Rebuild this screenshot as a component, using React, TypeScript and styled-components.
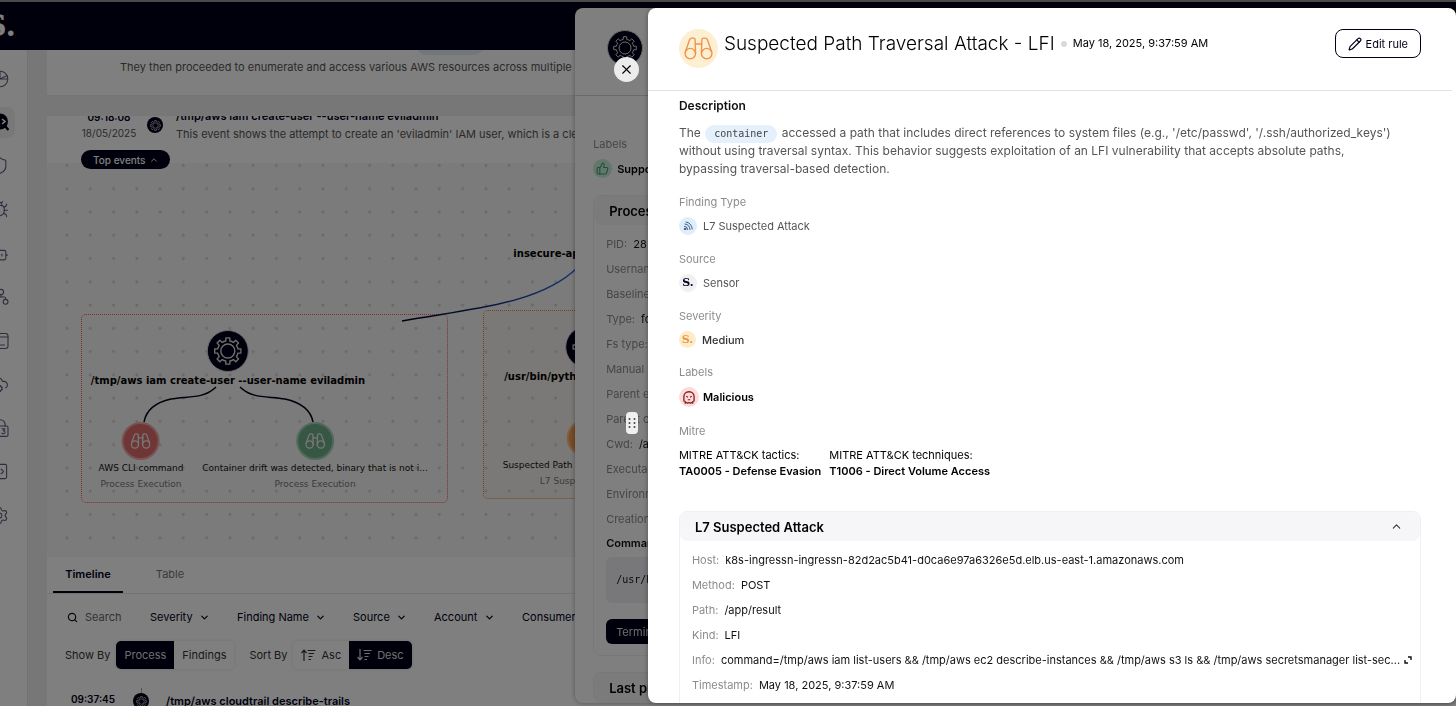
import React from "react";
import styled, { createGlobalStyle, css } from "styled-components";
import {
  ChevronDown,
  ChevronUp,
  Search,
  Pencil,
  X,
  ThumbsUp,
  Shield,
  Bug,
  Bot,
  CloudCog,
  SquareCode,
  Settings,
} from "lucide-react";

const INK = "#000018";

const GlobalStyle = createGlobalStyle`
  *, *::before, *::after { box-sizing: border-box; }
  body {
    margin: 0;
    background: #efefef;
    color: #111;
    font-family: Inter, "Liberation Sans", sans-serif;
    font-size: 11px;
    overflow: hidden;
  }
  button, input, select {
    font: inherit;
    color: inherit;
    background: none;
    border: 0;
    padding: 0;
    margin: 0;
  }
  button { cursor: pointer; white-space: nowrap; }
  h1, h2, h3, p, dl, dd, ul { margin: 0; padding: 0; }
  svg { display: block; flex: none; }
`;

/* ---------- icons ---------- */

const gearPath = (teeth: number, outer: number, inner: number) => {
  const step = (Math.PI * 2) / teeth;
  const pt = (r: number, a: number) =>
    `${(12 + r * Math.cos(a)).toFixed(2)} ${(12 + r * Math.sin(a)).toFixed(2)}`;
  let d = "";
  for (let i = 0; i < teeth; i++) {
    const a = i * step - Math.PI / 2;
    d += `${i ? "L" : "M"}${pt(inner, a - step * 0.26)}L${pt(outer, a - step * 0.19)}L${pt(outer, a + step * 0.19)}L${pt(inner, a + step * 0.26)}`;
    d += `A${inner} ${inner} 0 0 1 ${pt(inner, a + step * 0.74)}`;
  }
  return d + "Z";
};

const Gear = ({ size, stroke = 1 }: { size: number; stroke?: number }) => (
  <svg width={size} height={size} viewBox="0 0 24 24" fill="none" stroke="currentColor" strokeWidth={stroke} strokeLinejoin="round">
    <path d={gearPath(8, 11.4, 8.8)} />
    <circle cx="12" cy="12" r="6" />
  </svg>
);

const Binoculars = ({ width, stroke = 1.4 }: { width: number; stroke?: number }) => (
  <svg width={width} height={(width * 24) / 30} viewBox="0 0 30 24" fill="none" stroke="currentColor" strokeWidth={stroke} strokeLinecap="round" strokeLinejoin="round">
    <circle cx="6.5" cy="17.2" r="5.4" />
    <circle cx="23.5" cy="17.2" r="5.4" />
    <path d="M1.3 15.6 5.8 2.8Q6.4 1.2 8 1.2H9.8Q11.4 1.2 11.5 2.8L12 17" />
    <path d="M28.7 15.6 24.2 2.8Q23.6 1.2 22 1.2H20.2Q18.6 1.2 18.5 2.8L18 17" />
    <path d="M11.7 7.2H18.3" />
  </svg>
);

const Signal = () => (
  <svg width="10" height="10" viewBox="0 0 20 20" fill="none" stroke="currentColor" strokeWidth="1.7" strokeLinecap="round">
    <circle cx="4" cy="16" r="1.6" />
    <path d="M3 10.5A6.8 6.8 0 0 1 9.5 17M4 6A11.4 11.4 0 0 1 14 17M6 2A15 15 0 0 1 18.4 16" />
  </svg>
);

const Skull = () => (
  <svg width="12" height="13" viewBox="0 0 24 26" fill="none" stroke="currentColor" strokeWidth="2.6" strokeLinejoin="round">
    <path d="M12 1.500C5.500 1.500 1.800 5.500 1.800 11.500V20l2.700 1v3.500l2.500-1.500 2.500 1.500 2.500-1.500 2.500 1.500 2.500-1.500 2.500 1.500V21l2.700-1v-8.500C22.200 5.500 18.500 1.500 12 1.500Z" />
    <path d="M6.500 10.500 10 12.500M17.500 10.500 14 12.500M9.500 17.500h5" strokeWidth="2.200" />
  </svg>
);

const SortIcon = ({ up }: { up?: boolean }) => (
  <svg width="15" height="12" viewBox="0 0 15 12" fill="none" stroke="currentColor" strokeWidth="1.2">
    <path d={up ? "M3 12V1.500M.5 4 3 1.200 5.500 4" : "M3 0v10.500M.5 8 3 10.800 5.500 8"} />
    <path d="M6.500 1.500H14.500M7.500 4.500H13M7.500 7.500H11.500M7.500 10.500H10" />
  </svg>
);

const Expand = () => (
  <svg width="8" height="8" viewBox="0 0 8 8" fill="none" stroke="currentColor" strokeWidth="1.4">
    <path d="M4 1H7V4M4 7H1V4" />
  </svg>
);

const CaseSearch = () => (
  <svg width="18" height="18" viewBox="0 0 18 18">
    <circle cx="9" cy="8.500" r="8" fill={INK} />
    <path d="M14 13l3.500 4" stroke={INK} strokeWidth="2.500" />
    <path d="M11 6l3 2.500-3 2.500" stroke="#fff" strokeWidth="1.600" fill="none" />
  </svg>
);

const LineIcon = ({ children }: { children: React.ReactNode }) => (
  <svg width="18" height="18" viewBox="0 0 18 18" fill="none" stroke="currentColor" strokeWidth="1.1" strokeLinecap="round" strokeLinejoin="round">
    {children}
  </svg>
);

const Pie = () => (
  <LineIcon>
    <circle cx="9" cy="9" r="7.800" />
    <path d="M9 1.200V9L16 5.500M9 9H16.500" />
  </LineIcon>
);

const Tree = () => (
  <LineIcon>
    <circle cx="10" cy="4" r="2.600" />
    <circle cx="14.600" cy="13.800" r="2.400" />
    <circle cx="3" cy="13.800" r="2.400" />
    <path d="M10 6.600V9h3.200q1.400 0 1.400 1.400v1M10 9H4.400Q3 9 3 10.400v1" />
  </LineIcon>
);

const Inventory = () => (
  <LineIcon>
    <rect x="1" y="1.500" width="16" height="15" rx="2.500" />
    <path d="M1 5h16M9.500 13h4" />
  </LineIcon>
);

const LockThree = () => (
  <LineIcon>
    <rect x="1.500" y="7" width="15.500" height="10.400" rx="1.500" />
    <path d="M4.500 7V5.500a4.800 4.800 0 0 1 9.600 0V7M11 9.800h2.800l-1.600 1.800q1.900 0 1.900 1.600t-1.700 1.600q-1 0-1.500-.7" />
  </LineIcon>
);

/* ---------- page shell ---------- */

const Page = styled.div`
  height: 100vh;
  display: flex;
  flex-direction: column;
  overflow: hidden;
  border-top: 2px solid #949494;
`;

const TopBar = styled.header`
  flex: none;
  height: 48px;
  background: ${INK};
  display: flex;
  align-items: center;
`;

const Logo = styled.a`
  width: 16px;
  overflow: hidden;
  display: flex;
  justify-content: flex-end;
  color: #fff;
  text-decoration: none;
  font: bold 30px/36px "DejaVu Serif", serif;
`;

const Body = styled.div`
  flex: 1;
  min-height: 0;
  display: flex;
`;

const Sidebar = styled.nav`
  flex: none;
  width: 28px;
  padding-top: 13px;
  background: #fff;
  border-right: 1px solid #e4e4e4;
  overflow: hidden;
`;

const SideList = styled.div`
  height: 468px;
  display: flex;
  flex-direction: column;
  justify-content: space-between;
`;

const SideLink = styled.a<{ $active?: boolean }>`
  width: 15px;
  height: 31px;
  display: flex;
  justify-content: flex-end;
  align-items: center;
  padding-right: 6px;
  border-radius: 0 8px 8px 0;
  color: #5a5f7d;
  background: ${(p) => (p.$active ? "#f0f0f2" : "transparent")};
`;

const Main = styled.main`
  flex: 1;
  min-width: 0;
  padding-left: 19px;
  display: flex;
  flex-direction: column;
  gap: 20px;
`;

const SummaryCard = styled.section`
  flex: none;
  height: 46px;
  padding: 0 73px 18px;
  background: #fff;
  border-bottom: 1px solid #e8e8e8;
  display: flex;
  flex-direction: column;
  justify-content: flex-end;
  overflow: hidden;
  line-height: 19px;
  color: #555;
  white-space: nowrap;
`;

const HiddenTag = styled.span`
  flex: none;
  width: 66px;
  height: 19px;
  margin: 0 0 3px 297px;
  border-radius: 9px;
  background: #e0eefb;
`;

const StoryCard = styled.section`
  flex: 1;
  min-height: 0;
  display: flex;
  flex-direction: column;
  background: #fff;
  overflow: hidden;
`;

const EventStrip = styled.div`
  flex: none;
  height: 47px;
  padding: 0 34px 20px;
  display: flex;
  align-items: flex-end;
  overflow: hidden;
`;

const EventTime = styled.div`
  width: 56px;
  margin-bottom: 2px;
  text-align: center;
  font-size: 10px;
  line-height: 16px;
  color: #555;
  strong { display: block; color: ${INK}; font-weight: 600; }
`;

const EventText = styled.div`
  margin-left: 13px;
  line-height: 18px;
  color: #555;
  white-space: nowrap;
  h3 { font-size: 11px; line-height: 18px; font-weight: 600; color: ${INK}; }
`;

const MiniGear = styled.span`
  width: 16px;
  height: 16px;
  margin: 0 0 10px 10px;
  border-radius: 50%;
  background: ${INK};
  color: #ccc;
  display: grid;
  place-items: center;
  flex: none;
`;

/* ---------- graph ---------- */

const Canvas = styled.div`
  position: relative;
  flex: none;
  height: 394px;
  background: #f6f6f6;
  > svg { position: absolute; inset: 0; width: 100%; height: 100%; }
`;

const TopEvents = styled.button`
  position: absolute;
  z-index: 1;
  left: 34px;
  top: -13px;
  height: 19px;
  padding: 0 11px 0 12px;
  border-radius: 10px;
  background: ${INK};
  color: #fff;
  font-size: 10px;
  font-weight: 500;
  display: flex;
  align-items: center;
  gap: 4px;
`;

const Cluster = styled.div<{ $x: number; $y: number; $w: number; $tone: "red" | "orange" }>`
  position: absolute;
  left: ${(p) => p.$x}px;
  top: ${(p) => p.$y}px;
  width: ${(p) => p.$w}px;
  height: 189px;
  border: 1px dotted;
  border-radius: 5px;
  ${(p) =>
    p.$tone === "red"
      ? css`border-color: #ff5a5a; background: transparent;`
      : css`border-color: #ee8a30; background: rgba(255, 225, 190, 0.12);`}
`;

const Node = styled.div<{ $x: number; $y: number }>`
  position: absolute;
  left: ${(p) => p.$x}px;
  top: ${(p) => p.$y}px;
  transform: translateX(-50%);
  display: flex;
  flex-direction: column;
  align-items: center;
  font-family: "DejaVu Sans", sans-serif;
  white-space: nowrap;
`;

const ProcessDisc = styled.span`
  width: 42px;
  height: 42px;
  border-radius: 50%;
  border: 1px solid #d4d4dc;
  background: ${INK};
  color: #ddd;
  display: grid;
  place-items: center;
`;

const FindingDisc = styled.span<{ $fill: string; $ring: string }>`
  width: 38px;
  height: 38px;
  border-radius: 50%;
  border: 2px solid ${(p) => p.$ring};
  background: ${(p) => p.$fill};
  color: #eee;
  display: grid;
  place-items: center;
`;

const NodeTitle = styled.strong`
  font-size: 10px;
  line-height: 18px;
  color: #000;
`;

const NodeName = styled.span`
  font-size: 9px;
  line-height: 16px;
  color: #111;
`;

const NodeKind = styled.span`
  font-size: 9px;
  line-height: 16px;
  color: #777;
`;

/* ---------- tabs, filters ---------- */

const Tabs = styled.div`
  flex: none;
  height: 37px;
  padding-left: 6px;
  display: flex;
  gap: 12px;
  border-bottom: 1px solid #e6e6e6;
`;

const Tab = styled.button<{ $active?: boolean }>`
  width: 70px;
  color: ${(p) => (p.$active ? INK : "#777")};
  font-weight: ${(p) => (p.$active ? 600 : 400)};
  border-bottom: ${(p) => (p.$active ? `2px solid ${INK}` : "2px solid transparent")};
`;

const Filters = styled.div`
  flex: none;
  height: 46px;
  padding-left: 20px;
  display: flex;
  align-items: center;
  gap: 27px;
`;

const SearchBox = styled.label`
  width: 56px;
  display: flex;
  align-items: center;
  gap: 7px;
  input { flex: 1; min-width: 0; outline: 0; }
  input::placeholder { color: #666; opacity: 1; }
`;

const Dropdown = styled.label`
  display: flex;
  align-items: center;
  gap: 6px;
  color: ${INK};
  select { appearance: none; outline: 0; }
`;

const SortRow = styled.div`
  flex: none;
  height: 30px;
  padding-left: 18px;
  display: flex;
  align-items: center;
  color: #333;
`;

const Segment = styled.div`
  display: flex;
  height: 28px;
  margin: 0 15px 0 6px;
  border-radius: 5px;
  overflow: hidden;
  box-shadow: 0 0 4px rgba(0, 0, 0, 0.12);
`;

const SegmentButton = styled.button<{ $on?: boolean }>`
  display: flex;
  align-items: center;
  gap: 5px;
  padding: 0 8px;
  color: ${(p) => (p.$on ? "#ddd" : "#333")};
  background: ${(p) => (p.$on ? INK : "#fff")};
`;

const TimelineRow = styled.div`
  flex: none;
  height: 40px;
  margin-top: 18px;
  padding-left: 18px;
  display: flex;
  align-items: flex-start;
`;

const RowTime = styled.strong`
  width: 56px;
  text-align: center;
  font-size: 10px;
  line-height: 22px;
  font-weight: 600;
  color: ${INK};
`;

const RowMarker = styled.span`
  display: flex;
  flex-direction: column;
  align-items: center;
  margin-left: 12px;
  &::before { content: ""; height: 5px; border-left: 1px solid #aaa; }
  ${MiniGear} { margin: 0; }
`;

const RowTitle = styled.strong`
  margin-left: 17px;
  font-size: 11px;
  line-height: 26px;
  font-weight: 600;
  color: ${INK};
`;

/* ---------- drawers ---------- */

const Scrim = styled.div`
  position: fixed;
  inset: 0;
  z-index: 3;
  background: rgba(0, 0, 0, 0.5);
`;

const Drawer = styled.aside<{ $width: string; $front?: boolean }>`
  position: fixed;
  z-index: ${(p) => (p.$front ? 4 : 2)};
  top: 8px;
  right: 0;
  bottom: 3px;
  width: ${(p) => p.$width};
  background: #fff;
  border-radius: 8px;
  box-shadow: 0 0 5px rgba(0, 0, 0, 0.35);
`;

const DrawerScroll = styled.div`
  height: 100%;
  overflow: hidden;
  border-radius: 8px;
`;

const BackHeader = styled.div`
  height: 88px;
  padding: 22px 32px;
  border-bottom: 1px solid #d4d4d4;
  ${ProcessDisc} { width: 36px; height: 36px; }
`;

const BackBody = styled.div`
  padding: 40px 35px 0 18px;
`;

const FieldLabel = styled.div`
  line-height: 16px;
  color: #8c8c8c;
`;

const Panel = styled.section<{ $gap: number }>`
  margin-top: ${(p) => p.$gap}px;
  border: 1px solid #f0f0f2;
  border-radius: 8px;
`;

const PanelHead = styled.h2`
  height: 29px;
  padding: 0 17px 0 15px;
  border-radius: 8px;
  background: #f6f6f8;
  font-size: 13px;
  font-weight: 600;
  color: #000;
  display: flex;
  align-items: center;
  justify-content: space-between;
`;

const Facts = styled.dl`
  padding: 6px 12px 0;
  &:last-child { padding-bottom: 12px; }
`;

const Fact = styled.div`
  height: 25px;
  display: flex;
  align-items: center;
  gap: 6px;
  white-space: nowrap;
  dt { color: #8c8c8c; }
  dd { color: #111; display: flex; align-items: center; gap: 4px; }
`;

const CommandTitle = styled.h3`
  padding: 0 12px;
  font-size: 11px;
  line-height: 24px;
  font-weight: 600;
`;

const CommandBox = styled.pre`
  margin: 2px 12px 16px;
  padding: 0 10px;
  border-radius: 6px;
  background: #f0f0f6;
  font: 10px/46px "DejaVu Sans Mono", monospace;
`;

const DarkButton = styled.button`
  height: 25px;
  margin: 0 12px 11px;
  padding: 0 10px;
  border-radius: 6px;
  background: ${INK};
  color: #ddd;
`;

const CloseButton = styled.button`
  position: absolute;
  left: -34px;
  top: 49px;
  width: 25px;
  height: 25px;
  border-radius: 50%;
  background: #ececec;
  color: #000;
  display: grid;
  place-items: center;
`;

const DragHandle = styled.button`
  position: absolute;
  left: -22px;
  top: 404px;
  width: 12px;
  height: 22px;
  border-radius: 4px;
  background: #f0f0f0;
  color: #444;
  display: grid;
  place-items: center;
`;

const FrontHeader = styled.header`
  height: 83px;
  margin-right: 4px;
  padding: 21px 31px 0;
  border-bottom: 1px solid #e2e2e2;
  display: flex;
  align-items: flex-start;
`;

const Badge = styled.span<{ $size: number; $bg: string; $fg: string }>`
  flex: none;
  width: ${(p) => p.$size}px;
  height: ${(p) => p.$size}px;
  border-radius: 50%;
  background: ${(p) => p.$bg};
  color: ${(p) => p.$fg};
  display: grid;
  place-items: center;
`;

const TitleLine = styled.div`
  flex: 1;
  margin-left: 6px;
  display: flex;
  align-items: center;
  gap: 6px;
  line-height: 29px;
  color: #000;
  h1 { font-size: 19px; line-height: 29px; font-weight: 300; }
`;

const Dot = styled.i`
  width: 6px;
  height: 6px;
  border-radius: 50%;
  background: #dadada;
`;

const EditButton = styled.button`
  height: 29px;
  padding: 0 12px;
  border: 1px solid ${INK};
  border-radius: 8px;
  color: ${INK};
  display: flex;
  align-items: center;
  gap: 4px;
`;

const FrontBody = styled.div`
  padding: 6px 35px 0 31px;
`;

const SectionTitle = styled.h2`
  font-size: 12px;
  line-height: 18px;
  font-weight: 600;
  color: #111;
`;

const Description = styled.p`
  margin-top: 9px;
  padding-right: 20px;
  font-size: 12px;
  line-height: 18px;
  color: #555;
`;

const CodeTag = styled.code`
  margin: 0 1px;
  padding: 3px 9px 4px;
  border-radius: 9px;
  background: #e4f0fc;
  color: #444;
  font-family: "DejaVu Sans Mono", monospace;
  font-size: 10px;
  line-height: 10px;
`;

const Field = styled.div`
  margin-top: 16px;
`;

const FieldValue = styled.div<{ $weight?: number; $color?: string; $gap?: number }>`
  margin-top: 7px;
  display: flex;
  align-items: center;
  gap: ${(p) => p.$gap || 6}px;
  color: ${(p) => p.$color || "#555"};
  font-weight: ${(p) => p.$weight || 400};
`;

const SMark = styled.span`
  font: bold 11px/14px "DejaVu Serif", serif;
`;

const MitreRow = styled.div`
  display: flex;
  gap: 8px;
  margin-top: 8px;
  line-height: 16px;
  color: #000;
  strong { display: block; font-weight: 600; }
`;

const navIcon = { size: 19, strokeWidth: 1.4 };

const BACK_FACTS: [string, string][] = [
  ["PID:", "28"],
  ["Username:", "root"],
  ["Baseline:", "-"],
  ["Type:", "fork"],
  ["Fs type:", "overlay"],
  ["Manual run:", "-"],
  ["Parent executable:", "-"],
  ["Parent command:", "-"],
  ["Cwd:", "/app"],
  ["Executable:", "-"],
  ["Environment:", "-"],
  ["Creation time:", "-"],
];

const FRONT_FACTS: [string, string][] = [
  ["Host:", "k8s-ingressn-ingressn-82d2ac5b41-d0ca6e97a6326e5d.elb.us-east-1.amazonaws.com"],
  ["Method:", "POST"],
  ["Path:", "/app/result"],
  ["Kind:", "LFI"],
  [
    "Info:",
    "command=/tmp/aws iam list-users && /tmp/aws ec2 describe-instances && /tmp/aws s3 ls && /tmp/aws secretsmanager list-sec...",
  ],
  ["Timestamp:", "May 18, 2025, 9:37:59 AM"],
];

const NAV = [
  { label: "Dashboard", icon: <Pie /> },
  { label: "Investigate", icon: <CaseSearch />, active: true },
  { label: "Protection", icon: <Shield {...navIcon} /> },
  { label: "Vulnerabilities", icon: <Bug {...navIcon} /> },
  { label: "Agents", icon: <Bot {...navIcon} /> },
  { label: "Topology", icon: <Tree /> },
  { label: "Inventory", icon: <Inventory /> },
  { label: "Cloud", icon: <CloudCog {...navIcon} /> },
  { label: "Secrets", icon: <LockThree /> },
  { label: "Code", icon: <SquareCode {...navIcon} /> },
  { label: "Settings", icon: <Settings {...navIcon} /> },
];

const Graph = () => (
  <Canvas>
    <svg>
      <defs>
        <pattern id="dots" x="8.4" y="14" width="23.27" height="23.27" patternUnits="userSpaceOnUse">
          <circle cx="11.600" cy="11.600" r="1.500" fill="#d0d0d2" />
        </pattern>
        <linearGradient id="link" gradientUnits="userSpaceOnUse" x1="355" y1="0" x2="530" y2="0">
          <stop offset="0" stopColor={INK} />
          <stop offset="0.4" stopColor="#0a1c60" />
          <stop offset="1" stopColor="#2f6be8" />
        </linearGradient>
      </defs>
      <rect width="100%" height="100%" fill="url(#dots)" />
    </svg>
    <TopEvents>
      Top events <ChevronUp size={10} />
    </TopEvents>
    <Cluster $x={34} $y={151} $w={367} $tone="red" />
    <Cluster $x={436} $y={147} $w={206} $tone="orange" />
    <svg fill="none" strokeWidth="1.500">
      <path d="M355 158C420 146 492 142 530 105" stroke="url(#link)" />
      <path d="M169 224C157 236 141 233 124 236C106 240 99 248 97 259" stroke={INK} />
      <path d="M193 224C205 236 221 233 238 236C256 240 264 248 266 259" stroke={INK} />
    </svg>
    <Node $x={503} $y={82}>
      <NodeTitle>insecure-app</NodeTitle>
    </Node>
    <Node $x={181} $y={167}>
      <ProcessDisc><Gear size={28} stroke={1.2} /></ProcessDisc>
      <NodeTitle>/tmp/aws iam create-user --user-name eviladmin</NodeTitle>
    </Node>
    <Node $x={94} $y={259}>
      <FindingDisc $fill="#e06c6c" $ring="#f0a8a8"><Binoculars width={20} stroke={2} /></FindingDisc>
      <NodeName>AWS CLI command</NodeName>
      <NodeKind>Process Execution</NodeKind>
    </Node>
    <Node $x={268} $y={259}>
      <FindingDisc $fill="#6fae88" $ring="#a4d4b6"><Binoculars width={20} stroke={2} /></FindingDisc>
      <NodeName>Container drift was detected, binary that is not i...</NodeName>
      <NodeKind>Process Execution</NodeKind>
    </Node>
    <Node $x={539} $y={163}>
      <ProcessDisc><Gear size={28} stroke={1.2} /></ProcessDisc>
      <NodeTitle>/usr/bin/python3 /app/app.py</NodeTitle>
    </Node>
    <Node $x={539} $y={256}>
      <FindingDisc $fill="#f09a50" $ring="#f6c090"><Binoculars width={20} stroke={2} /></FindingDisc>
      <NodeName>Suspected Path Traversal Attack - LFI</NodeName>
      <NodeKind>L7 Suspected Attack</NodeKind>
    </Node>
  </Canvas>
);

export default function App() {
  return (
    <>
      <GlobalStyle />
      <Page>
        <TopBar>
          <Logo href="#" aria-label="Home">S.</Logo>
        </TopBar>
        <Body>
          <Sidebar>
            <SideList>
              {NAV.map((n) => (
                <SideLink key={n.label} href="#" aria-label={n.label} $active={n.active}>{n.icon}</SideLink>
              ))}
            </SideList>
          </Sidebar>
          <Main>
            <SummaryCard>
              <HiddenTag />
              <p>They then proceeded to enumerate and access various AWS resources across multiple services.</p>
            </SummaryCard>
            <StoryCard>
              <EventStrip>
                <EventTime><strong>09:18:08</strong>18/05/2025</EventTime>
                <MiniGear><Gear size={11} stroke={1.6} /></MiniGear>
                <EventText>
                  <h3>/tmp/aws iam create-user --user-name eviladmin</h3>
                  This event shows the attempt to create an 'eviladmin' IAM user, which is a clear sign
                </EventText>
              </EventStrip>
              <Graph />
              <Tabs role="tablist">
                <Tab role="tab" aria-selected="true" $active>Timeline</Tab>
                <Tab role="tab" aria-selected="false">Table</Tab>
              </Tabs>
              <Filters>
                <SearchBox>
                  <Search size={11} strokeWidth={2.6} />
                  <input placeholder="Search" aria-label="Search" />
                </SearchBox>
                {["Severity", "Finding Name", "Source", "Account", "Consumer"].map((f) => (
                  <Dropdown key={f}>
                    <select aria-label={f}><option>{f}</option></select>
                    <ChevronDown size={11} strokeWidth={2.6} />
                  </Dropdown>
                ))}
              </Filters>
              <SortRow>
                Show By
                <Segment>
                  <SegmentButton $on>Process</SegmentButton>
                  <SegmentButton>Findings</SegmentButton>
                </Segment>
                Sort By
                <Segment>
                  <SegmentButton><SortIcon up />Asc</SegmentButton>
                  <SegmentButton $on><SortIcon />Desc</SegmentButton>
                </Segment>
              </SortRow>
              <TimelineRow>
                <RowTime>09:37:45</RowTime>
                <RowMarker><MiniGear><Gear size={11} stroke={1.6} /></MiniGear></RowMarker>
                <RowTitle>/tmp/aws cloudtrail describe-trails</RowTitle>
              </TimelineRow>
            </StoryCard>
          </Main>
        </Body>
      </Page>

      <Drawer $width="60.5vw">
        <DrawerScroll>
          <BackHeader>
            <ProcessDisc><Gear size={24} /></ProcessDisc>
          </BackHeader>
          <BackBody>
            <FieldLabel>Labels</FieldLabel>
            <FieldValue $weight={600} $color="#000" $gap={5}>
              <Badge $size={19} $bg="#c8eedb" $fg="#4a9a78"><ThumbsUp size={13} /></Badge>
              Supported
            </FieldValue>
            <Panel $gap={17}>
              <PanelHead>Process</PanelHead>
              <Facts>
                {BACK_FACTS.map(([k, v]) => (
                  <Fact key={k}><dt>{k}</dt><dd>{v}</dd></Fact>
                ))}
              </Facts>
              <CommandTitle>Command</CommandTitle>
              <CommandBox>/usr/bin/python3.9</CommandBox>
              <DarkButton>Terminate</DarkButton>
            </Panel>
            <Panel $gap={16}>
              <PanelHead>Last process</PanelHead>
            </Panel>
          </BackBody>
        </DrawerScroll>
      </Drawer>

      <Scrim />

      <Drawer $width="55.5vw" $front>
        <CloseButton aria-label="Close"><X size={15} strokeWidth={1.8} /></CloseButton>
        <DragHandle aria-label="Resize panel">
          <svg width="8" height="12" viewBox="0 0 8 12" fill="currentColor">
            {[2, 6, 10].map((y) => (
              <React.Fragment key={y}>
                <circle cx="1.500" cy={y} r="1" />
                <circle cx="6.500" cy={y} r="1" />
              </React.Fragment>
            ))}
          </svg>
        </DragHandle>
        <DrawerScroll>
          <FrontHeader>
            <Badge $size={39} $bg="#fdefd2" $fg="#f0924a">
              <Binoculars width={29} />
            </Badge>
            <TitleLine>
              <h1>Suspected Path Traversal Attack - LFI</h1>
              <Dot />
              <time>May 18, 2025, 9:37:59 AM</time>
            </TitleLine>
            <EditButton><Pencil size={14} strokeWidth={2} />Edit rule</EditButton>
          </FrontHeader>
          <FrontBody>
            <SectionTitle>Description</SectionTitle>
            <Description>
              The <CodeTag>container</CodeTag> accessed a path that includes direct references to system files (e.g.,
              '/etc/passwd', '/.ssh/authorized_keys') without using traversal syntax. This behavior suggests
              exploitation of an LFI vulnerability that accepts absolute paths, bypassing traversal-based detection.
            </Description>
            <Field>
              <FieldLabel>Finding Type</FieldLabel>
              <FieldValue>
                <Badge $size={18} $bg="#e0eefc" $fg="#24406a"><Signal /></Badge>
                L7 Suspected Attack
              </FieldValue>
            </Field>
            <Field>
              <FieldLabel>Source</FieldLabel>
              <FieldValue>
                <Badge $size={18} $bg="#f0f0f2" $fg={INK}><SMark>S.</SMark></Badge>
                Sensor
              </FieldValue>
            </Field>
            <Field>
              <FieldLabel>Severity</FieldLabel>
              <FieldValue $weight={500} $color="#333">
                <Badge $size={17} $bg="#fdecc8" $fg="#f0924a"><SMark>S.</SMark></Badge>
                Medium
              </FieldValue>
            </Field>
            <Field>
              <FieldLabel>Labels</FieldLabel>
              <FieldValue $weight={600} $color="#000" $gap={4}>
                <Badge $size={20} $bg="#fadcdc" $fg="#8c1c1c"><Skull /></Badge>
                Malicious
              </FieldValue>
            </Field>
            <Field>
              <FieldLabel>Mitre</FieldLabel>
              <MitreRow>
                <div>MITRE ATT&amp;CK tactics:<strong>TA0005 - Defense Evasion</strong></div>
                <div>MITRE ATT&amp;CK techniques:<strong>T1006 - Direct Volume Access</strong></div>
              </MitreRow>
            </Field>
            <Panel $gap={32}>
              <PanelHead>
                L7 Suspected Attack
                <ChevronUp size={13} strokeWidth={2} color="#333" />
              </PanelHead>
              <Facts>
                {FRONT_FACTS.map(([k, v]) => (
                  <Fact key={k}>
                    <dt>{k}</dt>
                    <dd>{v}{k === "Info:" && <Expand />}</dd>
                  </Fact>
                ))}
              </Facts>
            </Panel>
          </FrontBody>
        </DrawerScroll>
      </Drawer>
    </>
  );
}
